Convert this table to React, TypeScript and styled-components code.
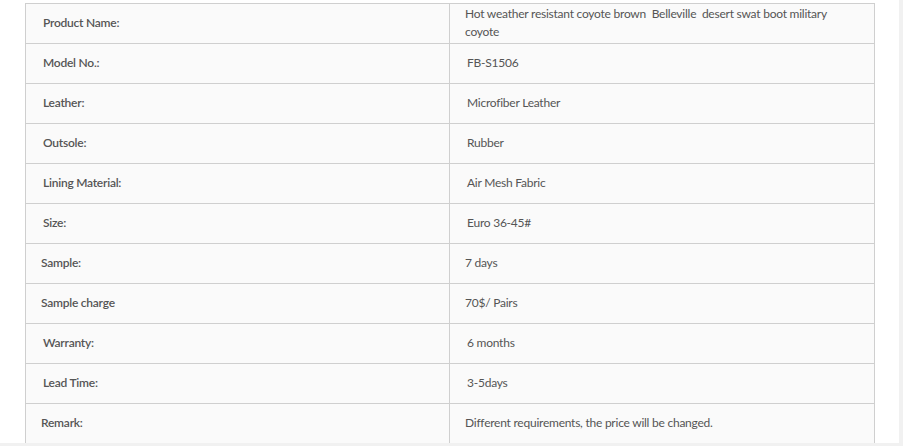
import React from "react";
import styled, { createGlobalStyle } from "styled-components";

const Global = createGlobalStyle`
  html, body { margin: 0; padding: 0; }
  body {
    background: #f1f1f1;
    font-family: "Source Sans Pro", Lato, "Open Sans", sans-serif;
    overflow: hidden;
  }
`;

const Page = styled.div`
  width: 899px;
  height: 443px;
  background: #ffffff;
  padding: 3px 0 0 25px;
  box-sizing: border-box;
`;

const Table = styled.table`
  border-collapse: collapse;
  width: 850px;
  table-layout: fixed;
  background: #fafafa;
`;

const Row = styled.tr`
  height: 40px;
`;

const Cell = styled.td<{ $indent: number; $bold?: boolean; $width?: number }>`
  border: 1px solid #cfcfcf;
  padding: 0 30px 1px ${(p) => p.$indent}px;
  height: 39px;
  box-sizing: border-box;
  vertical-align: middle;
  color: #555555;
  font-size: 12px;
  line-height: 18px;
  letter-spacing: -0.24px;
  font-weight: ${(p) => (p.$bold ? 600 : 400)};
  ${(p) => (p.$width ? `width: ${p.$width}px;` : "")}
`;

const rows: { label: string; li: number; value: string; vi: number }[] = [
  { label: "Product Name:", li: 17, value: "Hot weather resistant coyote brown\u00a0 Belleville\u00a0 desert swat boot military coyote", vi: 15 },
  { label: "Model No.:", li: 17, value: "FB-S1506", vi: 17 },
  { label: "Leather:", li: 17, value: "Microfiber Leather", vi: 17 },
  { label: "Outsole:", li: 17, value: "Rubber", vi: 17 },
  { label: "Lining Material:", li: 17, value: "Air Mesh Fabric", vi: 17 },
  { label: "Size:", li: 17, value: "Euro 36-45#", vi: 17 },
  { label: "Sample:", li: 15, value: "7 days", vi: 15 },
  { label: "Sample charge", li: 15, value: "70$/ Pairs", vi: 15 },
  { label: "Warranty:", li: 17, value: "6 months", vi: 17 },
  { label: "Lead Time:", li: 17, value: "3-5days", vi: 17 },
  { label: "Remark:", li: 15, value: "Different requirements, the price will be changed.", vi: 15 },
];

export default function App() {
  return (
    <>
      <Global />
      <Page>
        <Table>
          <tbody>
            {rows.map((r) => (
              <Row key={r.label}>
                <Cell $indent={r.li} $bold $width={424}>
                  {r.label}
                </Cell>
                <Cell $indent={r.vi}>{r.value}</Cell>
              </Row>
            ))}
          </tbody>
        </Table>
      </Page>
    </>
  );
}
